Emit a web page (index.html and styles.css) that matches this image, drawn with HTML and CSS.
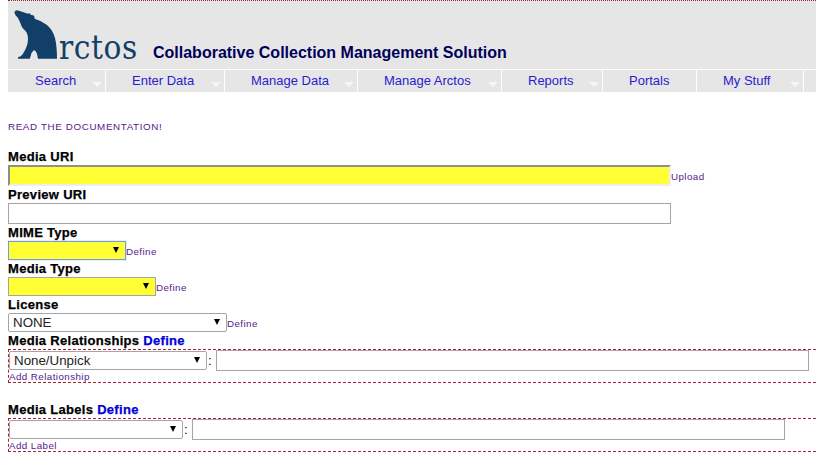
FILE: index.html
```html
<!DOCTYPE html>
<html lang="en">
<head>
<meta charset="utf-8">
<title>Arctos</title>
<link rel="stylesheet" href="styles.css">
</head>
<body>
<header class="header">
  <svg class="bear" width="50" height="60" viewBox="0 0 150 180" aria-hidden="true"><path d="M19 24Q23 17 33 20L60 29Q66 26 69 33L76 34Q80 37 80 44Q101 50 117 63Q135 79 141 102Q147 128 147 164H90Q87 142 78 138Q70 144 68 157L65 164H30V160Q39 158 44 151Q60 127 60 105Q60 85 47 76Q41 70 37 57L30 42Q20 34 19 24Z"/></svg>
  <span class="wordmark">rctos</span>
  <span class="tagline">Collaborative Collection Management Solution</span>
</header>
<nav class="menu">
  <a class="item w-search more" href="#">Search</a>
  <a class="item w-enter more" href="#">Enter Data</a>
  <a class="item w-data more" href="#">Manage Data</a>
  <a class="item w-arctos more" href="#">Manage Arctos</a>
  <a class="item w-reports more" href="#">Reports</a>
  <a class="item w-portals" href="#">Portals</a>
  <a class="item w-stuff more" href="#">My Stuff</a>
</nav>
<main class="form">
  <a class="small docs" href="#">READ THE DOCUMENTATION!</a>
  <label class="label">Media URI</label>
  <div class="row"><input class="text uri required"><a class="small upload" href="#">Upload</a></div>
  <label class="label">Preview URI</label>
  <div class="row"><input class="text uri"></div>
  <label class="label">MIME Type</label>
  <div class="row"><span class="pick s-mime focused"><select><option></option></select></span><a class="small" href="#">Define</a></div>
  <label class="label">Media Type</label>
  <div class="row"><span class="pick s-media"><select><option></option></select></span><a class="small" href="#">Define</a></div>
  <label class="label">License</label>
  <div class="row"><span class="pick s-license"><select><option>NONE</option></select></span><a class="small" href="#">Define</a></div>
  <label class="label">Media Relationships <a href="#">Define</a></label>
  <section class="group">
    <div class="row"><span class="pick s-rel"><select><option>None/Unpick</option></select></span><span class="colon">:</span><input class="text pair"></div>
    <a class="small add" href="#">Add Relationship</a>
  </section>
  <label class="label labels-title">Media Labels <a href="#">Define</a></label>
  <section class="group">
    <div class="row"><span class="pick s-label"><select><option></option></select></span><span class="colon">:</span><input class="text pair"></div>
    <a class="small add" href="#">Add Label</a>
  </section>
</main>
</body>
</html>
```
FILE: styles.css
```css
* { box-sizing: border-box; }
html { overflow: hidden; }
body { margin: 0 0 0 8px; background: #fff; font-family: "Liberation Sans", Arial, sans-serif; font-size: 13px; color: #000; }
a { text-decoration: none; }

.header { display: flex; height: 69px; background: #e6e6e6; border-top: 1px dotted #9c1c3c; }
.bear { flex: none; margin-top: 3px; fill: #123f68; }
.wordmark { width: 85px; margin-top: 27px; padding-left: 1px; font: 33px/40px "DejaVu Serif Condensed", "DejaVu Serif", serif; font-stretch: condensed; letter-spacing: .6px; color: #123f68; }
.tagline { margin-top: 43px; padding-left: 10px; font-size: 16px; line-height: 18px; font-weight: bold; color: #00005a; white-space: nowrap; }

.menu { display: flex; height: 22px; margin-top: 1px; background: #e6e6e6; }
.item { position: relative; flex: none; padding-top: 1px; border-right: 1px solid #fff; line-height: 19px; color: #2a1cd0; }
.more::after { content: ""; position: absolute; right: 3px; bottom: 5px; border: 5px solid transparent; border-top-color: #f6f6f6; border-bottom: 0; }
.w-search { width: 98px; padding-left: 27px; }
.w-enter { width: 119px; padding-left: 26px; }
.w-data { width: 133px; padding-left: 26px; }
.w-arctos { width: 144px; padding-left: 26px; }
.w-reports { width: 101px; padding-left: 26px; }
.w-portals { width: 94px; padding-left: 26px; }
.w-stuff { width: 107px; padding-left: 26px; }

.form { padding-top: 28px; }
.small { font-size: 9.8px; line-height: 12px; letter-spacing: .42px; color: #551a8b; }
.docs { display: block; height: 28px; line-height: 14px; letter-spacing: .63px; }
.label { display: block; height: 17px; font-weight: bold; line-height: 17px; letter-spacing: .3px; -webkit-text-stroke: .25px currentColor; }
.label a { color: #0000d8; }
.row { display: flex; }
.row .small { margin-top: 5px; }
.row .upload { margin-top: 6px; }
.text { display: block; height: 21px; padding: 0 3px; border: 1px solid #a5a5a5; background: #fff; }
.uri { width: 663px; }
.required { background: #ffff33; border: 2px solid; border-color: #8f8f8c #ededed #ededed #8f8f8c; }
.pair { width: 593px; }

.pick { position: relative; height: 19px; }
.pick select { display: block; width: 100%; height: 100%; padding: 0 4px; border: 1px solid #a5a5a5; border-radius: 2px; background: #fff; appearance: none; font: 13.33px/17px "Liberation Sans", Arial, sans-serif; color: #222; }
.pick::after { content: ""; position: absolute; right: 7px; top: 6px; border: 3px solid transparent; border-top: 6px solid #000; border-bottom: 0; }
.s-mime { width: 118px; }
.s-media { width: 148px; }
.s-license { width: 219px; }
.s-rel { width: 198px; }
.s-label { width: 174px; }
.s-mime select, .s-media select { background: #ffff33; border-radius: 0; }
.focused select { border-color: #6f9be0; outline: 0; box-shadow: 0 0 1px #6f9be0; }

.group { height: 34px; border: 1px dashed #b02035; border-right: 0; }
.group .row { height: 21px; }
.group .pick { margin-top: 1px; }
.group .add { display: block; line-height: 12px; }
.colon { width: 9px; padding-left: 1px; line-height: 21px; }
.labels-title { margin-top: 18px; }
```
